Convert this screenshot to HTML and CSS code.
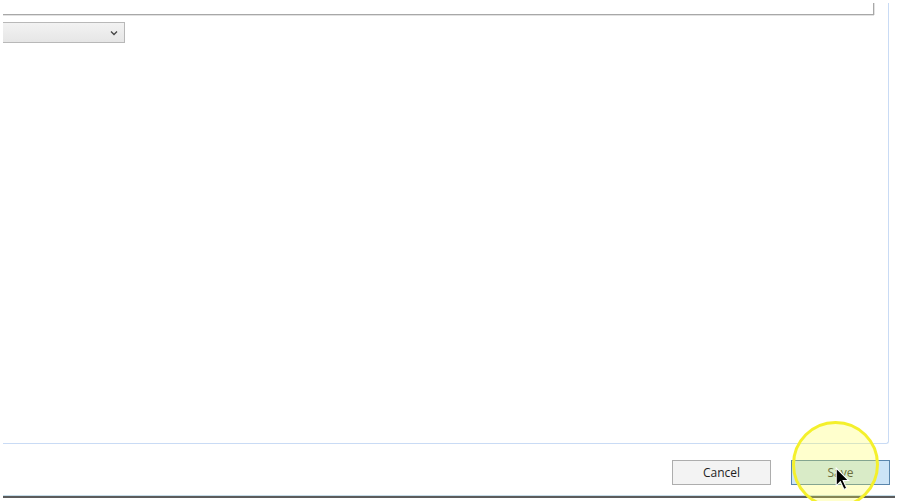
FILE: index.html
```html
<!DOCTYPE html>
<html>
<head>
<meta charset="utf-8">
<link rel="stylesheet" href="styles.css">
</head>
<body>
<div class="page">
  <div class="panel">
    <div class="textbox"></div>
    <div class="select">
      <svg class="chev" width="8" height="6" viewBox="0 0 8 6"><path d="M1 1.5 L4 4.5 L7 1.5" fill="none" stroke="#444" stroke-width="1.3"/></svg>
    </div>
  </div>
  <div class="actions">
    <button class="btn">Cancel</button>
    <button class="btn primary">Save</button>
  </div>
  <div class="footer-line"></div>
  <div class="highlight"></div>
  <svg class="cursor" width="17" height="25" viewBox="0 0 16 24"><path d="M1 1 L1 18 L5 14 L8.5 21.5 L11 20.3 L7.6 13 L13 13 Z" fill="#000" stroke="#fff" stroke-width="1"/></svg>
</div>
</body>
</html>
```
FILE: styles.css
```css
html, body {
  margin: 0;
  padding: 0;
  background: #fff;
}
.page {
  position: relative;
  width: 900px;
  height: 501px;
  overflow: hidden;
  padding-left: 3px;
  box-sizing: border-box;
  font-family: "Open Sans", "Noto Sans", sans-serif;
}
.panel {
  width: 886px;
  height: 444px;
  box-sizing: border-box;
  border-right: 1px solid #c9dbf5;
  border-bottom: 1px solid #c9dbf5;
  border-bottom-right-radius: 3px;
  display: flex;
  flex-direction: column;
  align-items: flex-start;
  clip-path: inset(3px 0 0 0);
}
.textbox {
  width: 871px;
  height: 15px;
  box-sizing: border-box;
  border-right: 1px solid #a8a8a8;
  border-bottom: 1px solid #a8a8a8;
  box-shadow: 0 1px 0 #e2e2e2, 1px 0 0 #e2e2e2;
  flex-shrink: 0;
}
.select {
  margin-top: 7px;
  width: 122px;
  height: 21px;
  box-sizing: border-box;
  border: 1px solid #b8b8b8;
  border-left: none;
  background: linear-gradient(#f2f2f2, #e6e6e6);
  display: flex;
  align-items: center;
  justify-content: flex-end;
  padding-right: 6px;
}
.chev {
  display: block;
}
.actions {
  display: flex;
  justify-content: flex-end;
  gap: 20px;
  margin-top: 16px;
  padding-right: 10px;
}
.btn {
  width: 99px;
  height: 25px;
  box-sizing: border-box;
  border: 1px solid #adadad;
  background: #f3f3f3;
  font-family: "Open Sans", "Noto Sans", sans-serif;
  font-size: 12px;
  color: #1e1e1e;
  padding: 0;
  margin: 0;
}
.btn.primary {
  background: #cce4f7;
  border-color: #5a86ad;
  color: #3a3a3a;
}
.footer-line {
  margin-top: 10px;
  width: 892px;
  height: 1px;
  background: #c6dde9;
  border-bottom: 2px solid #5c5c5c;
}
.highlight {
  position: absolute;
  left: 792px;
  top: 421px;
  width: 87px;
  height: 87px;
  box-sizing: border-box;
  border-radius: 50%;
  border: 3px solid #f4f02c;
  background: rgba(255, 255, 60, 0.26);
}
.cursor {
  position: absolute;
  left: 835px;
  top: 467px;
}
```
